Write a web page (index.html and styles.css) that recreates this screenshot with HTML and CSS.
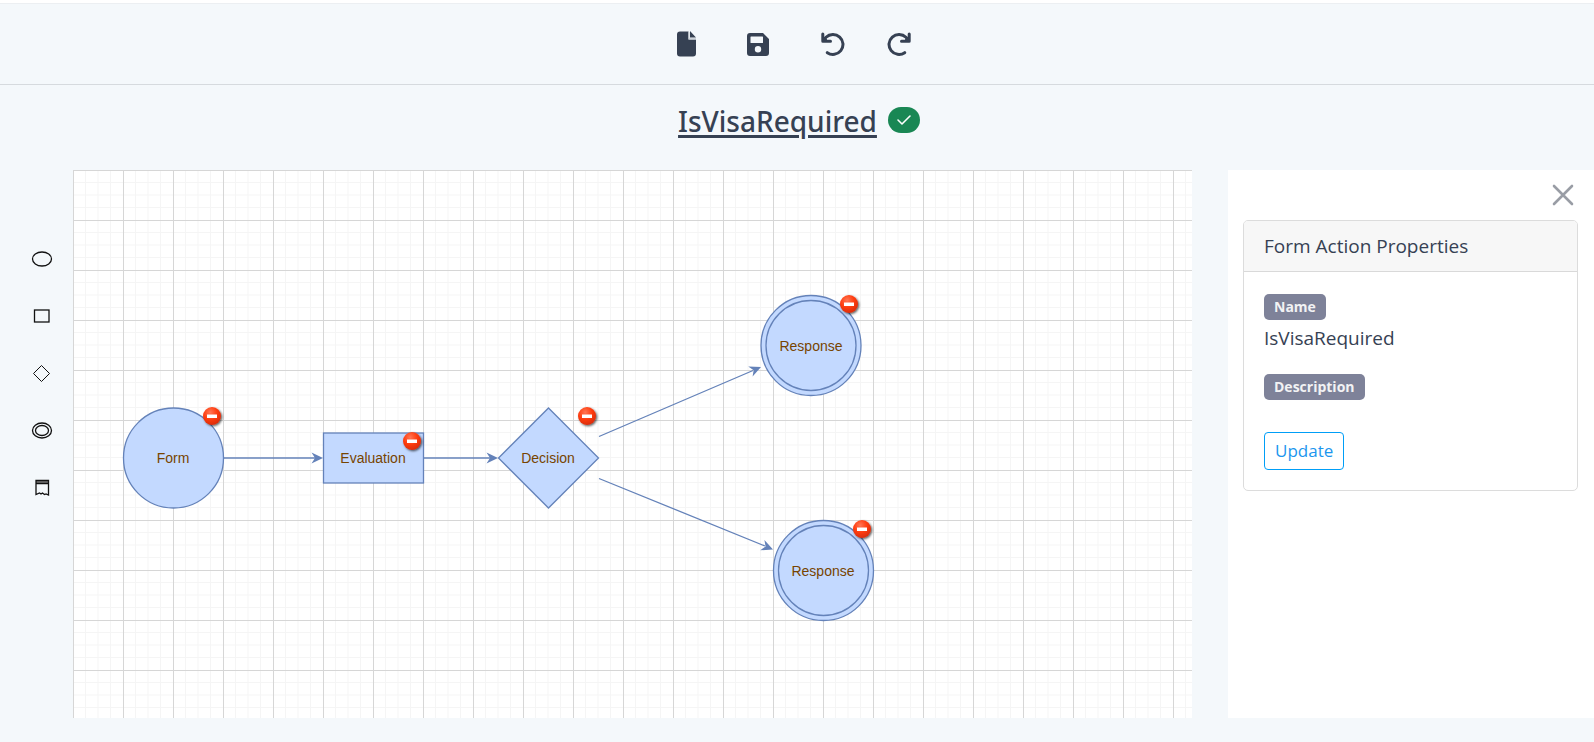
FILE: index.html
```html
<!DOCTYPE html>
<html lang="en">
<head>
<meta charset="utf-8">
<title>IsVisaRequired</title>
<link rel="stylesheet" href="styles.css">
</head>
<body>
<header class="toolbar">
  <button class="tool" aria-label="New"><svg width="20" height="26" viewBox="0 0 20 26"><path fill="currentColor" d="M3 .5H11.500V8.500H19V22.500a3 3 0 0 1-3 3H3a3 3 0 0 1-3-3V3.500a3 3 0 0 1 3-3zM13 0L19 6.500H13z"/><path fill="#cdd3da" d="M11.500 1H12.500V7H19V8.500H11.500z"/></svg></button>
  <button class="tool" aria-label="Save"><svg width="22" height="23" viewBox="0 0 22 23"><path fill="currentColor" fill-rule="evenodd" d="M3 0H16L22 6V20a3 3 0 0 1-3 3H3a3 3 0 0 1-3-3V3a3 3 0 0 1 3-3zM4 3.500a.5.5 0 0 0-.5.5V9.500a.5.5 0 0 0 .5.5H15.500a.5.5 0 0 0 .5-.5V4a.5.5 0 0 0-.5-.5zM11 13a3.200 3.200 0 1 0 0 6.400a3.200 3.200 0 0 0 0-6.400z"/></svg></button>
  <span class="history">
    <button class="tool" aria-label="Undo"><svg width="24" height="24" viewBox="0 0 24 24"><g fill="none" stroke="currentColor" stroke-width="3" stroke-linecap="round" stroke-linejoin="round"><path d="M1.800 2V9.300H9.500M2.500 8.500L5 5.300A10 10 0 1 1 6.300 20.700"/><path fill="currentColor" stroke-width="1" d="M2 4.500L7.500 9.500H2z"/></g></svg></button>
    <button class="tool" aria-label="Redo"><svg width="24" height="24" viewBox="0 0 24 24"><g fill="none" stroke="currentColor" stroke-width="3" stroke-linecap="round" stroke-linejoin="round"><path d="M22.200 2V9.300H14.500M21.500 8.500L19 5.300A10 10 0 1 0 17.700 20.700"/><path fill="currentColor" stroke-width="1" d="M22 4.500L16.500 9.500H22z"/></g></svg></button>
  </span>
</header>
<main>
  <div class="heading">
    <h1>IsVisaRequired</h1>
    <span class="valid"><svg width="16" height="12" viewBox="0 0 16 12"><path d="M2 6l4 4 8-8" fill="none" stroke="#fff" stroke-width="1.600" stroke-linecap="round" stroke-linejoin="round"/></svg></span>
  </div>
  <div class="workspace">
    <nav class="palette" aria-label="Shapes">
      <button aria-label="Form"><svg width="24" height="24"><ellipse cx="12" cy="12" rx="9.500" ry="7"/></svg></button>
      <button aria-label="Evaluation"><svg width="24" height="24"><rect x="4.500" y="6" width="14.500" height="12"/></svg></button>
      <button aria-label="Decision"><svg width="24" height="24"><path stroke-width="1" d="M11.500 4.500l8 8-8 8-8-8z"/></svg></button>
      <button aria-label="Response"><svg width="24" height="24"><ellipse cx="12" cy="12.500" rx="9.500" ry="7.500"/><ellipse cx="12" cy="12.500" rx="6.500" ry="5"/></svg></button>
      <button aria-label="Document"><svg width="24" height="24"><path stroke="#777" stroke-width="3" d="M6 7h12.500"/><path d="M6 5.500h12.500v14.500l-2.500-1-1.500.5-2-1.500-1.500 1-1.500-1-3.500 1.500zM6 8.500h12.500"/></svg></button>
    </nav>
    <svg class="canvas" role="img" aria-label="Decision flow diagram">
      <defs>
        <pattern id="grid" width="50" height="50" patternUnits="userSpaceOnUse">
          <path class="minor" d="M12.500 0V50M25 0V50M37.500 0V50M0 12.500H50M0 25H50M0 37.500H50"/>
          <path class="major" d="M.5 0V50M0 .5H50"/>
        </pattern>
        <radialGradient id="red" cx=".4" cy=".3" r=".75"><stop offset="0" stop-color="#ff7654"/><stop offset=".5" stop-color="#ff3d10"/><stop offset="1" stop-color="#d62a0a"/></radialGradient>
        <filter id="shade" x="-50%" y="-50%" width="200%" height="200%"><feDropShadow dx="1.200" dy="1.200" stdDeviation=".8" flood-opacity=".65"/></filter>
        <g id="remove"><circle r="9" fill="url(#red)" filter="url(#shade)"/><rect x="-5" y="-1.500" width="10" height="3.500" fill="#fff"/></g>
        <path id="head" d="M0 0L-11.500 5.500L-8 0L-11.500-5.500z"/>
      </defs>
      <rect width="100%" height="100%" fill="#fff"/>
      <rect width="100%" height="100%" fill="url(#grid)"/>
      <g class="edge">
        <path d="M150.500 288H242M350.500 288H417M526 266.500L680 200.500M526 308.500L692 376"/>
        <use href="#head" x="250" y="288"/>
        <use href="#head" x="425" y="288"/>
        <use href="#head" transform="translate(688 197) rotate(-23.200)"/>
        <use href="#head" transform="translate(700 379.500) rotate(22.100)"/>
      </g>
      <g class="node">
        <circle cx="100.500" cy="288" r="50"/>
        <rect x="250.500" y="263" width="100" height="50"/>
        <path d="M475.500 238l50 50-50 50-50-50z"/>
        <circle cx="738" cy="175.500" r="50"/><circle cx="738" cy="175.500" r="45"/>
        <circle cx="750.500" cy="400.500" r="50"/><circle cx="750.500" cy="400.500" r="45"/>
      </g>
      <g class="label">
        <text x="100" y="293">Form</text>
        <text x="300" y="293">Evaluation</text>
        <text x="475" y="293">Decision</text>
        <text x="738" y="181">Response</text>
        <text x="750" y="406">Response</text>
      </g>
      <use href="#remove" x="139" y="246"/><use href="#remove" x="339" y="271"/><use href="#remove" x="514" y="246"/><use href="#remove" x="776" y="134"/><use href="#remove" x="789" y="359"/>
    </svg>
    <aside class="panel">
      <button class="close" aria-label="Close"><svg width="22" height="22" viewBox="0 0 22 22"><path d="M2 2l18 18M20 2L2 20" stroke="#999da5" stroke-width="2.600" stroke-linecap="round"/></svg></button>
      <section class="card">
        <h2>Form Action Properties</h2>
        <div class="card-body">
          <span class="tag">Name</span>
          <p>IsVisaRequired</p>
          <span class="tag">Description</span>
          <button class="update">Update</button>
        </div>
      </section>
    </aside>
  </div>
</main>
</body>
</html>
```
FILE: styles.css
```css
* { box-sizing: border-box; }
body {
  margin: 0;
  min-height: 100vh;
  display: flex;
  flex-direction: column;
  border-top: 3px solid #fff;
  background: #f4f8fb;
  color: #364153;
  font: 19px/30px "Open Sans", "Noto Sans", sans-serif;
}
h1, h2, p { margin: 0; font-weight: 400; }
button { padding: 0; border: 0; background: none; color: inherit; font: inherit; cursor: pointer; }
svg { display: block; }
.toolbar {
  height: 82px;
  display: flex;
  justify-content: center;
  align-items: center;
  gap: 50px;
  padding-right: 6px;
  border-top: 1px solid #eceff2;
  border-bottom: 1px solid #d6dade;
}
.history { display: flex; gap: 42px; padding-left: 2px; }
main { flex: 1; display: flex; flex-direction: column; }
.heading {
  height: 85px;
  display: flex;
  justify-content: center;
  align-items: flex-start;
  gap: 11px;
  padding: 16px 0 0 4px;
}
h1 {
  font-family: "Noto Sans", "Open Sans", sans-serif;
  font-size: 28px;
  line-height: 40px;
  font-weight: 500;
  text-decoration: underline;
  text-decoration-thickness: 3px;
  text-underline-offset: 3px;
}
.valid {
  display: grid;
  place-items: center;
  width: 32px;
  height: 26px;
  margin-top: 6px;
  border-radius: 13px;
  background: #198754;
}
.workspace { flex: 1; display: flex; padding-bottom: 24px; }
.palette {
  width: 73px;
  display: flex;
  flex-direction: column;
  align-items: center;
  gap: 33px;
  padding: 77px 0 0 10px;
}
.palette svg { fill: none; stroke: #111; stroke-width: 1.3; }
.canvas { flex: 1; min-width: 0; height: auto; }
.minor { stroke: #f5f5f5; fill: none; }
.major { stroke: #d6d6d6; fill: none; }
.edge { fill: #6482b9; }
.edge path { stroke: #6482b9; stroke-width: 1.3; }
.node { fill: #c3d9ff; stroke: #6482b9; stroke-width: 1.3; }
.label { fill: #774400; font: 14px "Liberation Sans", Arial, sans-serif; text-anchor: middle; }
.panel {
  width: 366px;
  margin-left: 36px;
  padding: 14px 16px 0 15px;
  background: #fff;
}
.close { display: block; margin: 0 4px 14px auto; }
.card { border: 1px solid #dcdcdc; border-radius: 5px; overflow: hidden; }
h2 {
  padding: 10px 20px;
  font-size: 19px;
  line-height: 30px;
  background: #f7f7f7;
  border-bottom: 1px solid #d9d9d9;
}
.card-body { display: flex; flex-direction: column; align-items: flex-start; padding: 22px 20px 20px; }
.tag {
  padding: 0 10px;
  border-radius: 5px;
  background: #7e8299;
  color: #f2f2f4;
  font-size: 14px;
  line-height: 26px;
  font-weight: 700;
}
.card-body p { margin: 3px 0 21px; }
.update {
  margin-top: 32px;
  padding: 3px 10px;
  border: 1px solid #009ef7;
  border-radius: 4px;
  color: #1b96ee;
  font-size: 17px;
}
```
